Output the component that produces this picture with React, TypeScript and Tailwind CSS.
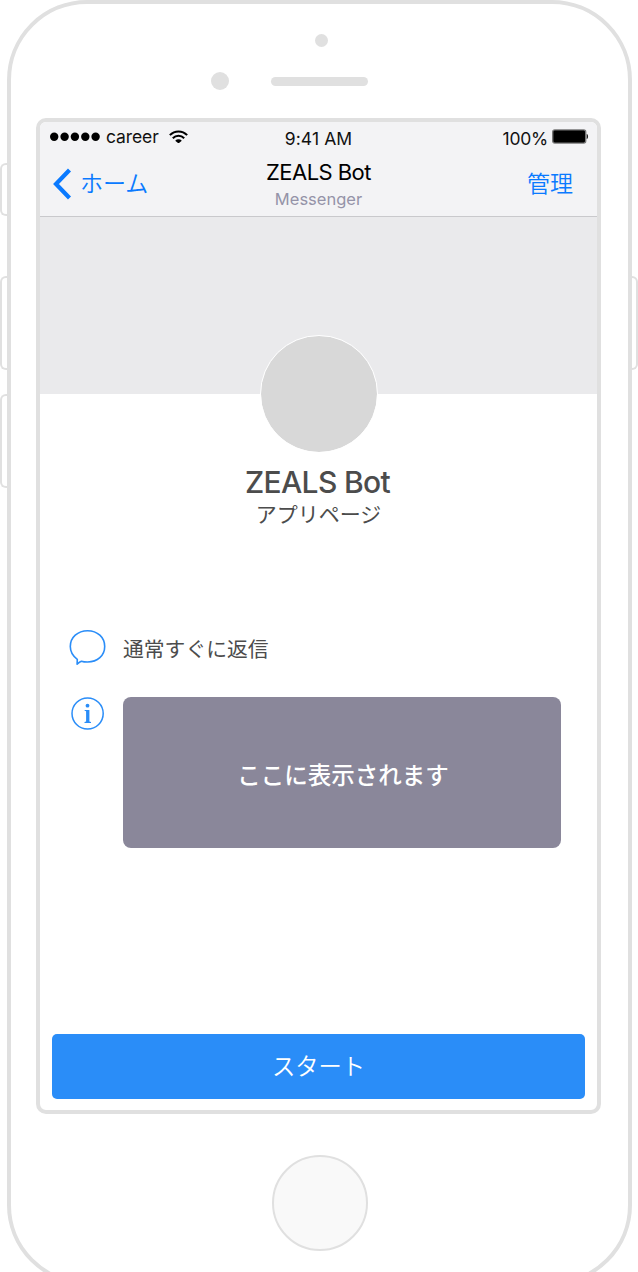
import type { ReactNode } from "react";

function StatusBar() {
  return (
    <div className="grid h-[30px] grid-cols-[1fr_auto_1fr] items-center pr-2 pl-[10px] text-[17.5px] leading-none text-[#111]">
      <div className="flex items-center">
        <svg width="50" height="10" viewBox="0 0 50 10" fill="#000">
          <circle cx="4.2" cy="4.7" r="4.2" />
          <circle cx="14.6" cy="4.7" r="4.2" />
          <circle cx="24.9" cy="4.7" r="4.2" />
          <circle cx="35.3" cy="4.7" r="4.2" />
          <circle cx="45.6" cy="4.7" r="4.2" />
        </svg>
        <span className="ml-[6px] tracking-[-0.1px]">career</span>
        <svg className="mb-px ml-[10px]" width="19" height="13.5" viewBox="0 0 20 14" fill="none" stroke="#000" strokeWidth="2.2">
          <path d="M.9 5.3C6 .1 14 .1 19.1 5.3" />
          <path d="M4 8.5c3.4-3.3 8.6-3.3 12 0" />
          <path d="M6.5 11.1c2-1.9 5-1.9 7 0L10 14z" fill="#000" stroke="none" />
        </svg>
      </div>
      <span className="mr-[2px] pt-[3px] tracking-[0.1px]">9:41 AM</span>
      <div className="flex items-center justify-end">
        <span className="pt-[3px] tracking-[-0.25px]">100%</span>
        <svg className="mb-px ml-1" width="37" height="15" viewBox="0 0 37 15">
          <rect x=".7" y=".9" width="33" height="13.2" rx="2" fill="#000" stroke="#777" strokeWidth="1.4" />
          <path d="M34.7 5c1.8.2 1.8 4.8 0 5z" fill="#222" />
        </svg>
      </div>
    </div>
  );
}

function NavBar() {
  return (
    <div className="grid h-[64px] grid-cols-[1fr_auto_1fr] items-start pr-6 pl-[13px]">
      <div className="flex h-[64px] items-center text-[23px] text-[#0a7aff]">
        <svg width="19" height="32" viewBox="0 0 19 32" fill="none" stroke="#0a7aff" strokeWidth="4.2">
          <path d="M16.5 2 3 16l13.5 14" />
        </svg>
        <span className="ml-2 pt-px font-[350]">ホーム</span>
      </div>
      <div className="ml-[11px] flex flex-col items-center">
        <span className="mt-[6px] text-[22px] leading-[28px] tracking-[-0.55px] text-black">ZEALS Bot</span>
        <span className="pt-px text-[16.5px] leading-[24px] text-[#9593a8]">Messenger</span>
      </div>
      <div className="flex h-[64px] items-center justify-end pt-px text-[23px] font-[350] text-[#0a7aff]">管理</div>
    </div>
  );
}

function InfoRow({ icon, children }: { icon: ReactNode; children: ReactNode }) {
  return (
    <div className="flex items-start">
      <div className="flex w-[54px] shrink-0 pl-px">{icon}</div>
      {children}
    </div>
  );
}

function BubbleIcon() {
  return (
    <svg width="37" height="37" viewBox="0 0 37 37" fill="none" stroke="#2a8df8" strokeWidth="1.6" strokeLinejoin="round">
      <path d="M8.3 30.3C3.8 27 1.3 22.5 1.3 17.5 1.3 8.4 8.7 1.7 18.6 1.7S35.7 8.4 35.7 17.5 28.5 33 18.6 33c-2.5 0-4.5-.2-6.200-.8-1.600.5-2.800 1.500-4.300 2.900z" />
    </svg>
  );
}

function InfoIcon() {
  return (
    <svg className="ml-[2px]" width="35" height="34" viewBox="0 0 35 34" fill="none">
      <circle cx="16.6" cy="16.5" r="15.6" stroke="#2a8df8" strokeWidth="1.5" />
      <circle cx="16.5" cy="8.7" r="1.9" fill="#2a8df8" />
      <path d="M13.6 12.9h4.8v11.6l1.6.6v.9h-6.500v-.9l1.600-.6V14.300l-1.500-.5z" fill="#2a8df8" />
    </svg>
  );
}

function Screen() {
  return (
    <div className="ml-[25px] flex h-[996px] w-[565px] shrink-0 flex-col overflow-hidden rounded-[10px] border-4 border-[#e0e0e0] bg-white">
      <header className="h-[95px] shrink-0 border-b border-[#c9c9cc] bg-[#f3f3f5]">
        <StatusBar />
        <NavBar />
      </header>
      <div className="h-[177px] shrink-0 bg-[#eaeaec]" />
      <div className="-mt-[59px] flex flex-col items-center pr-px text-[#4c4c4c]">
        <div className="ml-[2px] size-[118px] rounded-full border border-white bg-[#d8d8d8] bg-clip-padding" />
        <h1 className="mt-[9px] mr-px text-[30px] leading-[40px] font-medium tracking-[-0.65px]">ZEALS Bot</h1>
        <p className="pt-px pl-px text-[21px] leading-[24px]">アプリページ</p>
      </div>
      <div className="mt-[102px] flex flex-col gap-[29px] pl-[28px]">
        <InfoRow icon={<BubbleIcon />}>
          <p className="ml-px pt-[3px] text-[20.8px] leading-[36px] text-[#4c4c4c]">通常すぐに返信</p>
        </InfoRow>
        <InfoRow icon={<InfoIcon />}>
          <div className="ml-px flex h-[151px] w-[438px] items-center justify-center rounded-[8px] bg-[#8a879a] pt-[6px] pl-[2px] text-[23.5px] font-medium text-white">
            ここに表示されます
          </div>
        </InfoRow>
      </div>
      <button className="mt-auto mb-[11px] ml-3 h-[65px] w-[533px] shrink-0 rounded-[5px] bg-[#2a8df8] pt-px text-[23.3px] font-[350] text-white">
        スタート
      </button>
    </div>
  );
}

export default function App() {
  return (
    <div className="flex h-[1272px] w-[638px] overflow-hidden bg-white font-['Inter','Noto_Sans_CJK_JP',sans-serif]">
      <div className="flex w-[7px] shrink-0 flex-col pt-[163px]">
        <div className="h-[53px] shrink-0 rounded-l-[6px] border-2 border-r-0 border-[#e0e0e0]" />
        <div className="mt-[60px] h-[94px] shrink-0 rounded-l-[6px] border-2 border-r-0 border-[#e0e0e0]" />
        <div className="mt-[24px] h-[94px] shrink-0 rounded-l-[6px] border-2 border-r-0 border-[#e0e0e0]" />
      </div>
      <div className="flex h-[1285px] w-[625px] shrink-0 flex-col rounded-[80px] border-4 border-[#e0e0e0]">
        <div className="mt-[30px] ml-[303.5px] size-[13px] shrink-0 rounded-full bg-[#e0e0e0]" />
        <div className="mt-[25px] ml-[200.4px] flex h-[18px] shrink-0 items-center gap-[42px]">
          <div className="size-[18px] rounded-full bg-[#e0e0e0]" />
          <div className="h-[9px] w-[97px] rounded-full bg-[#e0e0e0]" />
        </div>
        <div className="h-[28px] shrink-0" />
        <Screen />
        <div className="mt-[41px] ml-[261px] size-[96px] shrink-0 rounded-full border-2 border-[#e0e0e0] bg-[#f9f9f9]" />
      </div>
      <div className="w-[6px] shrink-0 pt-[276px]">
        <div className="h-[94px] rounded-r-[6px] border-2 border-l-0 border-[#e0e0e0]" />
      </div>
    </div>
  );
}
